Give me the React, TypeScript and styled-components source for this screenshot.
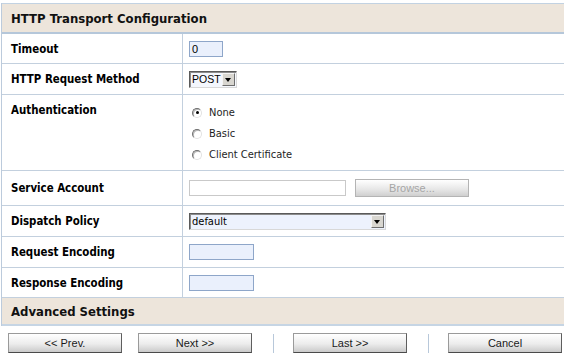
import styled, { createGlobalStyle } from "styled-components";

const GlobalStyle = createGlobalStyle`
  html, body {
    margin: 0;
    padding: 0;
    background: #ffffff;
  }
  body {
    font-family: "DejaVu Sans Condensed", "DejaVu Sans", sans-serif;
    color: #000;
  }
`;

type Field = {
  label: string;
  height: number;
  top?: boolean;
  content: React.ReactNode;
};

const App = () => {
  const fields: Field[] = [
    { label: "Timeout", height: 30, content: <TextBox $width={34} $tint>0</TextBox> },
    {
      label: "HTTP Request Method",
      height: 31,
      content: (
        <Select $width={48} $mono>
          <SelectText $mono>POST</SelectText>
          <Arrow />
        </Select>
      ),
    },
    {
      label: "Authentication",
      height: 76,
      top: true,
      content: (
        <RadioList>
          <RadioRow>
            <Radio $checked />
            <RadioLabel>None</RadioLabel>
          </RadioRow>
          <RadioRow>
            <Radio />
            <RadioLabel>Basic</RadioLabel>
          </RadioRow>
          <RadioRow>
            <Radio />
            <RadioLabel>Client Certificate</RadioLabel>
          </RadioRow>
        </RadioList>
      ),
    },
    {
      label: "Service Account",
      height: 35,
      content: (
        <Inline>
          <TextBox $width={157} $disabled />
          <BrowseButton>Browse...</BrowseButton>
        </Inline>
      ),
    },
    {
      label: "Dispatch Policy",
      height: 31,
      content: (
        <Select $width={197}>
          <SelectText>default</SelectText>
          <Arrow />
        </Select>
      ),
    },
    { label: "Request Encoding", height: 31, content: <TextBox $width={65} $tint /> },
    { label: "Response Encoding", height: 30, content: <TextBox $width={65} $tint /> },
  ];

  return (
    <>
      <GlobalStyle />
      <Page>
        <Panel>
          <SectionHeader>HTTP Transport Configuration</SectionHeader>
          {fields.map((f) => (
            <Row key={f.label} $height={f.height}>
              <Label $top={f.top}>{f.label}</Label>
              <Value $top={f.top}>{f.content}</Value>
            </Row>
          ))}
          <SectionHeader $closing>Advanced Settings</SectionHeader>
        </Panel>
        <ButtonBar>
          <NavButton>&lt;&lt; Prev.</NavButton>
          <NavButton $gap>Next &gt;&gt;</NavButton>
          <Separator />
          <NavButton>Last &gt;&gt;</NavButton>
          <Separator />
          <NavButton>Cancel</NavButton>
        </ButtonBar>
      </Page>
    </>
  );
};

export default App;

const Page = styled.div`
  width: 564px;
  height: 355px;
  overflow: hidden;
  padding-top: 3px;
  box-sizing: border-box;
`;

const Panel = styled.div`
  margin-left: 1px;
  border-left: 1px solid #bccbdc;
`;

const SectionHeader = styled.div<{ $closing?: boolean }>`
  box-sizing: border-box;
  height: ${(p) => (p.$closing ? 28 : 31)}px;
  display: flex;
  align-items: center;
  padding-left: 9px;
  background: #ede5db;
  border-top: ${(p) => (p.$closing ? "none" : "1px solid #c2d2e2")};
  border-bottom: 2px solid ${(p) => (p.$closing ? "#c6d5e4" : "#b5c7da")};
  font-size: 13px;
  font-weight: bold;
  color: #111;
`;

const Row = styled.div<{ $height: number }>`
  box-sizing: border-box;
  height: ${(p) => p.$height}px;
  display: grid;
  grid-template-columns: 181px 1fr;
  border-bottom: 1px solid #c3d0de;
`;

const Label = styled.div<{ $top?: boolean }>`
  display: flex;
  align-items: ${(p) => (p.$top ? "flex-start" : "center")};
  padding: ${(p) => (p.$top ? "8px" : "0")} 0 0 9px;
  border-right: 1px solid #c3d0de;
  font-size: 11.4px;
  font-weight: bold;
  line-height: 14px;
`;

const Value = styled.div<{ $top?: boolean }>`
  display: flex;
  align-items: ${(p) => (p.$top ? "flex-start" : "center")};
  padding-left: 6px;
`;

const TextBox = styled.div<{ $width: number; $tint?: boolean; $disabled?: boolean }>`
  box-sizing: border-box;
  width: ${(p) => p.$width}px;
  height: 16px;
  padding: 1px 2px 0;
  background: ${(p) => (p.$tint ? "#eaf0fc" : "#ffffff")};
  border: 1px solid ${(p) => (p.$disabled ? "#c9c9c9" : "#8ea6c9")};
  font-family: "Liberation Sans", Arial, sans-serif;
  font-size: 11px;
  line-height: 13px;
`;

const Select = styled.div<{ $width: number; $mono?: boolean }>`
  box-sizing: border-box;
  width: ${(p) => p.$width}px;
  height: 17px;
  display: flex;
  align-items: center;
  justify-content: space-between;
  padding: 1px;
  background: ${(p) => (p.$mono ? "#f4f7fd" : "#edf2fd")};
  border-style: solid;
  border-width: 1px;
  border-color: #5a5a5a #d8d8d8 #d8d8d8 #5a5a5a;
  box-shadow: inset 1px 1px 0 #8c8c8c;
`;

const SelectText = styled.span<{ $mono?: boolean }>`
  padding-left: 1px;
  font-family: ${(p) =>
    p.$mono ? '"Liberation Sans", Arial, sans-serif' : '"DejaVu Sans Condensed", sans-serif'};
  font-size: ${(p) => (p.$mono ? 10.5 : 11)}px;
  line-height: 13px;
  color: #000;
`;

const Arrow = styled.span`
  box-sizing: border-box;
  width: 13px;
  height: 13px;
  flex-shrink: 0;
  position: relative;
  background: #d8d6d0;
  border-style: solid;
  border-width: 1px;
  border-color: #f4f4f4 #6e6e6e #6e6e6e #f4f4f4;

  &::after {
    content: "";
    position: absolute;
    left: 2px;
    top: 4px;
    border-left: 3.5px solid transparent;
    border-right: 3.5px solid transparent;
    border-top: 4px solid #000;
  }
`;

const RadioList = styled.div`
  display: flex;
  flex-direction: column;
  padding: 7px 0 0 3px;
`;

const RadioRow = styled.div`
  display: flex;
  align-items: center;
  gap: 7px;
  height: 21px;
`;

const Radio = styled.span<{ $checked?: boolean }>`
  box-sizing: border-box;
  width: 10px;
  height: 10px;
  position: relative;
  border-radius: 50%;
  background: #ffffff;
  border-style: solid;
  border-width: 1px;
  border-color: #6e6e6e #e2e2e2 #e2e2e2 #6e6e6e;
  box-shadow: inset 1px 1px 0 #b8b8b8;

  &::after {
    content: "";
    display: ${(p) => (p.$checked ? "block" : "none")};
    position: absolute;
    left: 2.5px;
    top: 2.5px;
    width: 3px;
    height: 3px;
    border-radius: 50%;
    background: #000;
  }
`;

const RadioLabel = styled.span`
  font-size: 11px;
  color: #1e1e1e;
`;

const Inline = styled.div`
  display: flex;
  align-items: center;
  gap: 9px;
`;

const BrowseButton = styled.div`
  box-sizing: border-box;
  width: 114px;
  height: 18px;
  display: flex;
  align-items: center;
  justify-content: center;
  background: linear-gradient(#ffffff, #e6e6e6 60%, #cfcfcf);
  border: 1px solid #b4b4b4;
  font-family: "Liberation Sans", Arial, sans-serif;
  font-size: 11px;
  color: #a5a5a5;
`;

const ButtonBar = styled.div`
  display: flex;
  align-items: center;
  padding: 7px 0 0 8px;
`;

const NavButton = styled.div<{ $gap?: boolean }>`
  box-sizing: border-box;
  width: 114px;
  height: 20px;
  margin-left: ${(p) => (p.$gap ? 16 : 0)}px;
  display: flex;
  align-items: center;
  justify-content: center;
  background: linear-gradient(#ffffff, #ececec 55%, #cacaca);
  border-style: solid;
  border-width: 1px;
  border-color: #9a9a9a #5e5e5e #4a4a4a #9a9a9a;
  font-family: "Liberation Sans", Arial, sans-serif;
  font-size: 11px;
  color: #1a1a1a;
`;

const Separator = styled.span`
  width: 1px;
  height: 19px;
  margin: 0 19px 0 21px;
  background: #b8c8da;
`;
